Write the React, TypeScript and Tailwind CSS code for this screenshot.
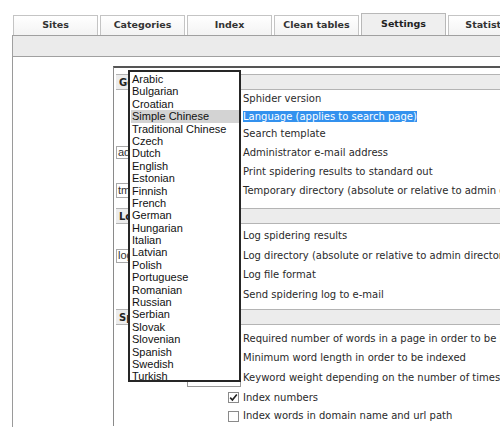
import React from "react";

const tabs = ["Sites", "Categories", "Index", "Clean tables", "Settings", "Statistics"];

const langs = [
  "Arabic", "Bulgarian", "Croatian", "Simple Chinese", "Traditional Chinese", "Czech", "Dutch",
  "English", "Estonian", "Finnish", "French", "German", "Hungarian", "Italian", "Latvian",
  "Polish", "Portuguese", "Romanian", "Russian", "Serbian", "Slovak", "Slovenian", "Spanish",
  "Swedish", "Turkish",
];

const sans = { fontFamily: '"DejaVu Sans", Verdana, sans-serif' };

function Header({ title }: { title: string }) {
  return (
    <div
      className="h-[16px] border-y border-[#b4b4b4] bg-[#ececec] flex items-center pl-[3px] text-[10px] font-bold text-[#222]"
      style={sans}
    >
      {title}
    </div>
  );
}

function Row({
  h,
  label,
  left,
  highlight,
}: {
  h: string;
  label: string;
  left?: React.ReactNode;
  highlight?: boolean;
}) {
  return (
    <div className={`flex items-center ${h}`}>
      <div className="w-[127px] shrink-0 h-full flex items-center">{left}</div>
      <div className="text-[10px] text-[#2a2a2a] whitespace-nowrap leading-[12px]" style={sans}>
        {highlight ? <span className="bg-[#3391ee] text-white">{label}</span> : label}
      </div>
    </div>
  );
}

function TextInput({ value, h }: { value: string; h: string }) {
  return (
    <div
      className={`w-[110px] ${h} border border-[#a8a8a8] bg-white flex items-center pl-[1px] text-[11px] text-[#333] overflow-hidden`}
      style={{ fontFamily: '"Liberation Sans", Arial, sans-serif' }}
    >
      {value}
    </div>
  );
}

function Check({ checked }: { checked?: boolean }) {
  return (
    <div className="ml-[112px] w-[11px] h-[11px] border border-[#8a8a8a] bg-white flex items-center justify-center">
      {checked && (
        <svg width="9" height="9" viewBox="0 0 9 9">
          <path d="M1.2 4.6 L3.4 7 L7.8 1.4" fill="none" stroke="#222" strokeWidth="1.6" />
        </svg>
      )}
    </div>
  );
}

export default function App() {
  return (
    <div className="w-[500px] h-[427px] overflow-hidden relative bg-white">
      {/* tabs */}
      <div className="flex items-end gap-[2px] pl-[13px] pt-[13px] h-[35px]">
        {tabs.map((t) => {
          const active = t === "Settings";
          return (
            <div
              key={t}
              className={`w-[85px] shrink-0 flex items-center justify-center text-[9.5px] font-bold border border-b-0 ${
                active
                  ? "h-[22px] bg-[#efefef] border-[#b8b8b8] text-[#222]"
                  : "h-[20px] bg-gradient-to-b from-white to-[#f3f3f3] border-[#c4c4c4] text-[#333]"
              }`}
              style={sans}
            >
              {t}
            </div>
          );
        })}
      </div>
      {/* gray bar */}
      <div className="ml-[12px] h-[22px] bg-[#ebebeb] border-y border-l border-[#a0a0a0]" />
      {/* content */}
      <div className="ml-[12px] border-l border-[#9a9a9a] h-[400px] pt-[9px]">
        <div className="ml-[100px] w-[430px] border-t-2 border-l border-t-[#555] border-l-[#8a8a8a] pl-[2px] pt-[6px]">
          <Header title="General settings" />
          <Row h="h-[18px]" label="Sphider version" />
          <Row h="h-[17px]" label="Language (applies to search page)" highlight />
          <Row h="h-[18px]" label="Search template" />
          <Row
            h="h-[19px]"
            label="Administrator e-mail address"
            left={<TextInput value="admin@localhost" h="h-[13px]" />}
          />
          <Row h="h-[19px]" label="Print spidering results to standard out" />
          <Row
            h="h-[19px]"
            label="Temporary directory (absolute or relative to admin directory)"
            left={<TextInput value="tmp" h="h-[15px]" />}
          />
          <div className="h-[8px]" />
          <Header title="Logging settings" />
          <div className="h-[2px]" />
          <Row h="h-[20px]" label="Log spidering results" />
          <Row
            h="h-[19px]"
            label="Log directory (absolute or relative to admin directory)"
            left={<TextInput value="log" h="h-[14px]" />}
          />
          <Row h="h-[20px]" label="Log file format" />
          <Row h="h-[19px]" label="Send spidering log to e-mail" />
          <div className="h-[5px]" />
          <Header title="Spider settings" />
          <div className="h-[4px]" />
          <Row h="h-[20px]" label="Required number of words in a page in order to be indexed" />
          <Row h="h-[17px]" label="Minimum word length in order to be indexed" />
          <Row
            h="h-[23px]"
            label="Keyword weight depending on the number of times it appears in a page"
            left={<div className="ml-[71px] w-[54px] h-[17px] mt-[1px] border border-[#999] bg-white" />}
          />
          <Row h="h-[17px]" label="Index numbers" left={<Check checked />} />
          <Row h="h-[20px]" label="Index words in domain name and url path" left={<Check />} />
        </div>
      </div>
      {/* open dropdown list */}
      <div
        className="absolute left-[128px] top-[70px] w-[113px] h-[312px] border-2 border-[#262626] bg-white pt-[1px] pl-[1px]"
        style={{ fontFamily: '"Liberation Sans", Arial, sans-serif' }}
      >
        {langs.map((l) => (
          <div
            key={l}
            className={`h-[12.4px] leading-[12.4px] text-[11px] pl-[1px] text-[#111] whitespace-nowrap ${
              l === "Simple Chinese" ? "bg-[#d3d3d3]" : ""
            }`}
          >
            {l}
          </div>
        ))}
      </div>
    </div>
  );
}
